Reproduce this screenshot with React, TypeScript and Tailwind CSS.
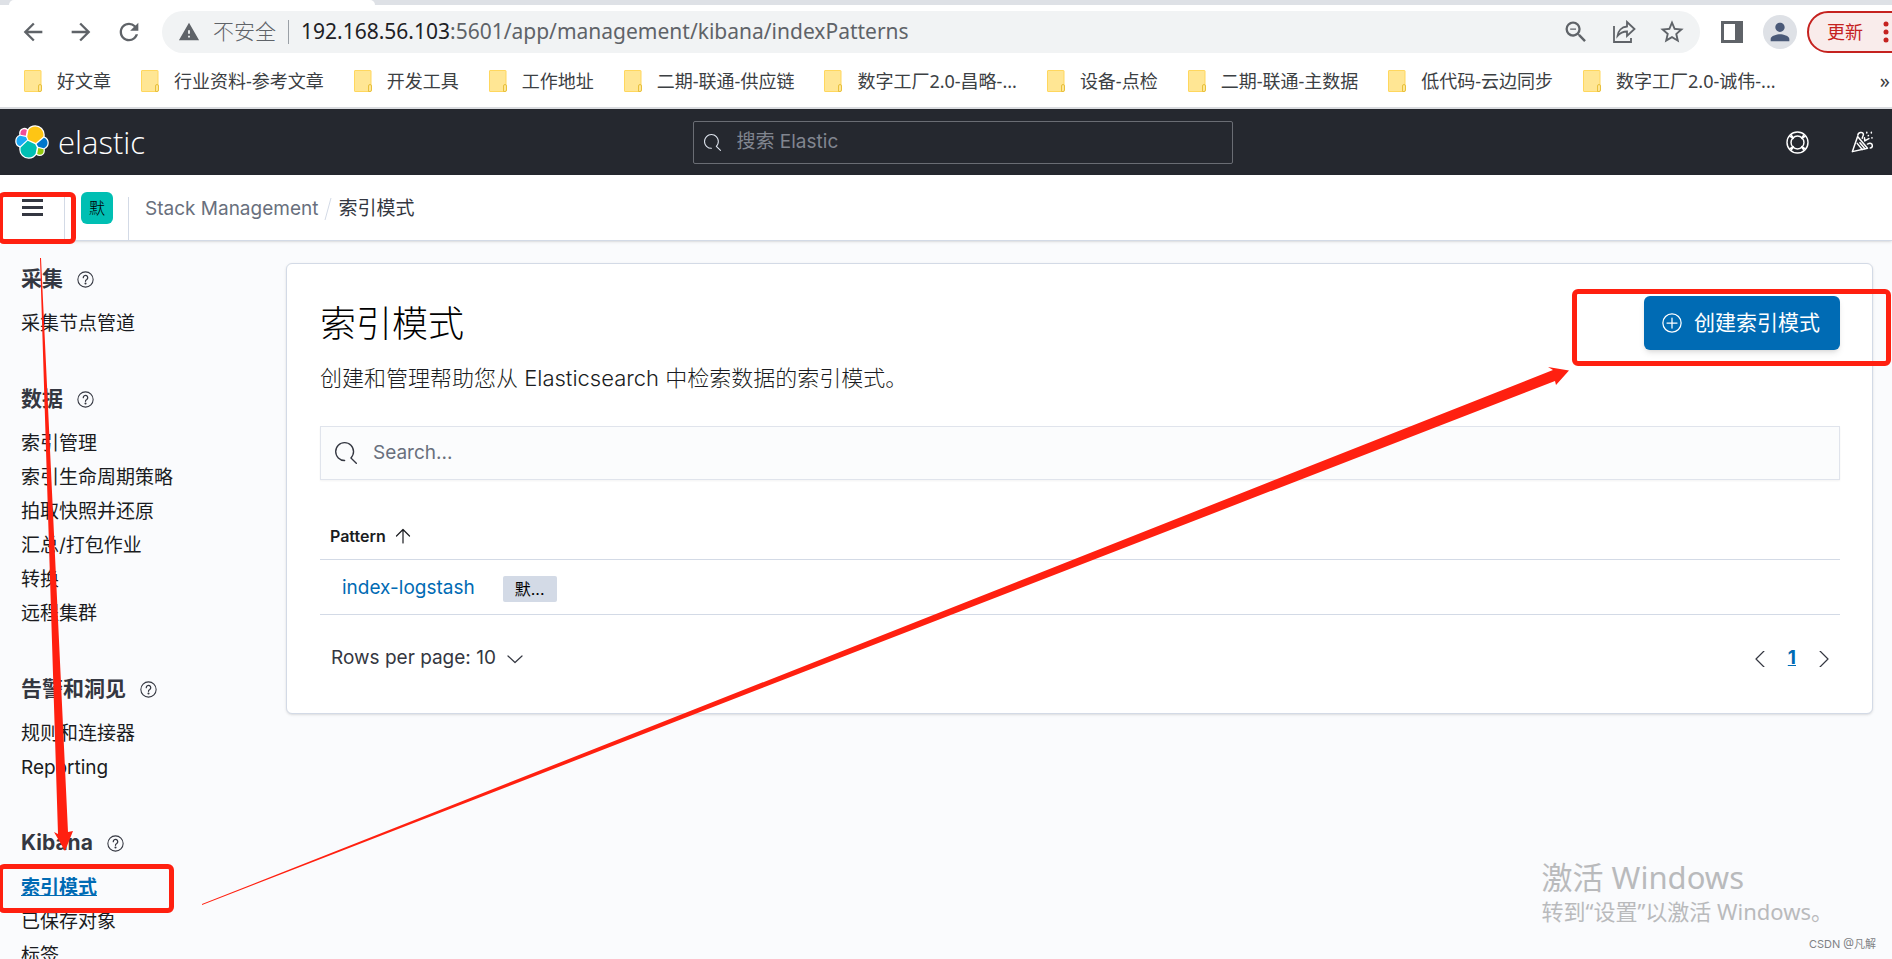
import type { ReactNode, SVGProps } from 'react';
import { MdArrowBack, MdArrowForward, MdOutlineZoomOut, MdPerson, MdRefresh, MdStarBorder, MdWarning } from 'react-icons/md';

interface NavSection {
  title: string;
  items: string[];
}

const bookmarks = [
  '好文章',
  '行业资料-参考文章',
  '开发工具',
  '工作地址',
  '二期-联通-供应链',
  '数字工厂2.0-昌略-...',
  '设备-点检',
  '二期-联通-主数据',
  '低代码-云边同步',
  '数字工厂2.0-诚伟-...',
];

const sections: NavSection[] = [
  { title: '采集', items: ['采集节点管道'] },
  {
    title: '数据',
    items: ['索引管理', '索引生命周期策略', '拍取快照并还原', '汇总/打包作业', '转换', '远程集群'],
  },
  { title: '告警和洞见', items: ['规则和连接器', 'Reporting'] },
  { title: 'Kibana', items: ['索引模式', '已保存对象', '标签'] },
];

const ACTIVE_ITEM = '索引模式';

// Elastic logo segments, 32x32 grid
const logoParts = [
  { fill: '#FEC514', d: 'M12.58 13.787l7.002 3.211 7.066-6.213a7.849 7.849 0 00.152-1.557c0-4.287-3.464-7.75-7.725-7.782a7.73 7.73 0 00-6.402 3.418l-1.176 6.117 1.083 2.806z' },
  { fill: '#00BFB3', d: 'M5.333 21.228A7.964 7.964 0 005.18 22.8c0 4.3 3.48 7.8 7.76 7.8a7.73 7.73 0 006.43-3.44l1.165-6.1-1.556-2.99-7.03-3.218-6.616 6.376z' },
  { fill: '#F04E98', d: 'M5.288 9.067l4.8 1.137L11.14 4.72a3.785 3.785 0 00-6.069 3.015c0 .457.073.906.217 1.332z' },
  { fill: '#1BA9F5', d: 'M4.872 10.214a5.293 5.293 0 00-3.482 4.976 5.25 5.25 0 003.4 4.9l6.735-6.12-1.237-2.652-5.416-1.104z' },
  { fill: '#93C90E', d: 'M20.873 27.195a3.765 3.765 0 002.285.777 3.78 3.78 0 003.79-3.784c0-.46-.08-.908-.23-1.34l-4.8-1.126-1.045 5.473z' },
  { fill: '#0077CC', d: 'M21.848 20.563l5.28 1.238a5.295 5.295 0 003.483-4.978 5.25 5.25 0 00-3.37-4.89l-6.906 6.056 1.513 2.574z' },
];

function ElasticLogo() {
  return (
    <svg viewBox="0 0 32 32" className="size-[34px]" aria-hidden="true">
      {logoParts.map((part) => (
        <path key={part.fill} d={part.d} fill="#fff" stroke="#fff" strokeWidth="2.4" strokeLinejoin="round" />
      ))}
      {logoParts.map((part) => (
        <path key={part.fill} d={part.d} fill={part.fill} />
      ))}
    </svg>
  );
}

function SearchIcon(props: SVGProps<SVGSVGElement>) {
  return (
    <svg viewBox="0 0 16 16" fill="currentColor" aria-hidden="true" {...props}>
      <path d="M11.271 11.978l3.872 3.873a.502.502 0 00.708 0 .502.502 0 000-.708l-3.565-3.564c2.38-2.747 2.267-6.923-.342-9.532-2.73-2.73-7.17-2.73-9.898 0-2.728 2.729-2.728 7.17 0 9.9a6.955 6.955 0 004.949 2.05.5.5 0 000-1 5.96 5.96 0 01-4.242-1.757 6.01 6.01 0 010-8.486 6.004 6.004 0 018.484 0 6.01 6.01 0 010 8.486.5.5 0 00.034.738z" />
    </svg>
  );
}

function LineIcon({ children, ...props }: SVGProps<SVGSVGElement> & { children: ReactNode }) {
  return (
    <svg
      viewBox="0 0 16 16"
      fill="none"
      stroke="currentColor"
      strokeLinecap="round"
      strokeLinejoin="round"
      aria-hidden="true"
      {...props}
    >
      {children}
    </svg>
  );
}

function HelpIcon() {
  return (
    <LineIcon className="size-[17px] text-[#343741]">
      <circle cx="8" cy="8" r="7.2" />
      <path d="M5.9 6.3a2.1 2.1 0 1 1 3.3 1.7C8.4 8.500 8 8.900 8 9.700" strokeWidth="1.200" />
      <circle cx="8" cy="11.800" r=".5" fill="currentColor" />
    </LineIcon>
  );
}

function CheerIcon() {
  return (
    <LineIcon className="size-[22px]" strokeWidth="1.100">
      <path d="M1 15L4.800 4 12 12.500z" />
      <path d="M4.500 9l3.700 4.500M6.500 8.500l3.500 4.300" />
      <path d="M5 3C5 1 8.500.2 9 2.200c.3 1.200-.8 1.800-.8 3" />
      <path d="M10 7.200L13 5.500M10 7.200L9.800 5M12 9.500c2-1 3.500-.5 3.500 1.300 0 1-.6 1.600-1.500 1.600" />
      <path d="M11.500 1v.4M14.800 1v.4M12.500 3.500l.2-.2M15.200 5h.1" />
    </LineIcon>
  );
}

function FolderIcon() {
  return (
    <svg viewBox="0 0 18 22" className="h-[22px] w-[18px]" aria-hidden="true">
      <rect x=".5" y=".5" width="16.500" height="21" rx=".5" fill="#ffe694" stroke="#ffd75e" />
      <path d="M14.500 21.500v-5.500a1.500 1.500 0 0 1 3 0v4a1.500 1.500 0 0 1-1.500 1.500z" fill="#ffe694" stroke="#e8c03c" />
    </svg>
  );
}

function BrowserChrome() {
  return (
    <div className="shrink-0 border-b-2 border-[#dadce0] bg-white font-['Noto_Sans','Noto_Sans_CJK_SC',sans-serif]">
      <div className="flex h-[5px] bg-[#dee1e6]">
        <div className="ml-[9px] w-[366px] rounded-t-md bg-white" />
      </div>

      <div className="flex h-[54px] items-center overflow-hidden text-[#5f6368]">
        <div className="flex w-[162px] shrink-0 items-center gap-5 pl-[19px]">
          <button type="button" aria-label="后退"><MdArrowBack className="size-7" /></button>
          <button type="button" aria-label="前进"><MdArrowForward className="size-7" /></button>
          <button type="button" aria-label="重新加载"><MdRefresh className="size-7" /></button>
        </div>

        <div className="flex h-[42px] min-w-0 flex-1 items-center rounded-full bg-[#f1f3f4] pr-[14px] pl-4">
          <MdWarning className="size-[22px] shrink-0" />
          <span className="ml-[13px] shrink-0 text-[21px] font-light">不安全</span>
          <span className="mx-3 h-6 w-px shrink-0 bg-[#9aa0a6]" />
          <span className="min-w-0 flex-1 truncate text-[21px]">
            <span className="text-[#202124]">192.168.56.103</span>
            :5601/app/management/kibana/indexPatterns
          </span>
          <div className="flex shrink-0 items-center gap-5">
            <button type="button" aria-label="缩小"><MdOutlineZoomOut className="size-7" /></button>
            <button type="button" aria-label="分享" className="flex w-7 justify-center">
              <svg viewBox="0 0 24 24" className="size-6" fill="none" stroke="currentColor" strokeWidth="1.800" aria-hidden="true">
                <path d="M2 6v16h17v-4" />
                <path d="M15 2l7.500 7-7.500 7v-4.500c-4 0-7 1.500-9.500 4.500C6 11 9.500 7 15 6.500z" />
              </svg>
            </button>
            <button type="button" aria-label="收藏"><MdStarBorder className="size-7" /></button>
          </div>
        </div>

        <div className="flex w-[192px] shrink-0 items-center">
          <button type="button" aria-label="侧边栏" className="ml-[21px]">
            <svg viewBox="0 0 22 22" className="size-[22px]" aria-hidden="true">
              <path d="M0 0h22v22H0zM3 3v16h11V3z" fill="currentColor" fillRule="evenodd" />
            </svg>
          </button>
          <button type="button" aria-label="用户" className="ml-5 flex size-[34px] shrink-0 items-center justify-center rounded-full bg-[#dee1e6] text-[#4a5a78]">
            <MdPerson className="size-7" />
          </button>
          <button type="button" className="ml-[10px] flex h-[42px] w-[104px] shrink-0 items-center gap-5 rounded-full border-2 border-[#c5221f] bg-[#f9eceb] pl-[18px] text-[18px] text-[#c5221f]">
            更新
            <svg viewBox="0 0 6 22" className="h-[22px] w-[6px]" fill="currentColor" aria-hidden="true">
              <circle cx="3" cy="3" r="2.500" />
              <circle cx="3" cy="11" r="2.500" />
              <circle cx="3" cy="19" r="2.500" />
            </svg>
          </button>
        </div>
      </div>

      <nav className="flex h-12 items-center justify-between pr-[2px] pb-[5px] pl-6" aria-label="书签">
        <div className="flex min-w-0 gap-[30px] overflow-hidden">
          {bookmarks.map((name) => (
            <a key={name} href="#bookmark" className="flex shrink-0 items-center gap-[15px] text-[18px] leading-6 text-[#3c4043]">
              <FolderIcon />
              {name}
            </a>
          ))}
        </div>
        <button type="button" aria-label="更多书签" className="text-[20px] leading-6 text-[#3c4043]">»</button>
      </nav>
    </div>
  );
}

function KibanaHeader() {
  return (
    <header className="shrink-0">
      <div className="flex h-[66px] items-center bg-[#25282f] text-white">
        <div className="flex flex-1 basis-0 items-center gap-[9px] pl-[15px]">
          <ElasticLogo />
          <span className="font-['Open_Sans',sans-serif] text-[31px] leading-9 font-light">elastic</span>
        </div>
        <label className="ml-[37px] flex h-[43px] w-[540px] items-center rounded-xs border border-[#6a6d74] pl-[10px]">
          <SearchIcon className="size-[17px] shrink-0 text-[#dfe5ef]" />
          <input
            type="search"
            aria-label="搜索 Elastic"
            placeholder="搜索 Elastic"
            className="ml-4 min-w-0 flex-1 bg-transparent text-[19px] outline-none placeholder:text-[#81858f]"
          />
        </label>
        <div className="flex flex-1 basis-0 items-center justify-end gap-[42px] pr-[19px]">
          <button type="button" aria-label="帮助">
            <LineIcon className="size-[23px]">
              <circle cx="8" cy="8" r="7.300" />
              <circle cx="8" cy="8" r="4.500" />
              <path d="M2.900 3.700l2 1.500M3.700 2.900l1.500 2M12.300 2.900l-1.500 2M13.100 3.700l-2 1.500M2.900 12.300l2-1.500M3.700 13.100l1.500-2M12.300 13.100l-1.500-2M13.100 12.300l-2-1.500" />
            </LineIcon>
          </button>
          <button type="button" aria-label="新闻"><CheerIcon /></button>
        </div>
      </div>

      <div className="flex h-[66px] border-b border-[#d3dae6] bg-white text-[19px] shadow-sm">
        <div className="mt-[22px] flex w-[65px] items-start border-r border-[#d3dae6] pl-[22px]">
          <button type="button" aria-label="菜单" className="flex flex-col gap-1 pt-[2px]">
            <span className="h-[3px] w-[21px] bg-[#343741]" />
            <span className="h-[3px] w-[21px] bg-[#343741]" />
            <span className="h-[3px] w-[21px] bg-[#343741]" />
          </button>
        </div>
        <button type="button" className="mt-[17px] ml-4 size-8 rounded-md bg-[#00bfb3] text-[16px] font-light text-black">默</button>
        <div className="mt-[22px] ml-[15px] border-r border-[#d3dae6]" />
        <nav className="mt-[18px] ml-4 flex h-8 items-center" aria-label="面包屑">
          <a href="#management" className="text-[#69707d]">Stack Management</a>
          <svg viewBox="0 0 8 22" className="mx-[6px] h-[22px] w-2" stroke="#d3dae6" aria-hidden="true">
            <path d="M1 22L7 0" />
          </svg>
          <span className="text-[#343741]">索引模式</span>
        </nav>
      </div>
    </header>
  );
}

function SideNav() {
  return (
    <nav className="flex w-[286px] shrink-0 flex-col gap-[42px] pt-[22px] pl-[21px]" aria-label="管理">
      {sections.map((section) => (
        <section key={section.title}>
          <h2 className="flex h-8 items-center gap-[14px] text-[21px] font-bold text-[#343741]">
            {section.title}
            <HelpIcon />
          </h2>
          <ul className="mt-3">
            {section.items.map((item) => (
              <li key={item} className="h-[34px] text-[19px] leading-[34px] whitespace-nowrap">
                <a
                  href="#section"
                  className={item === ACTIVE_ITEM ? 'font-bold text-[#006bb4] underline' : 'text-[#1a1c21]'}
                >
                  {item}
                </a>
              </li>
            ))}
          </ul>
        </section>
      ))}
    </nav>
  );
}

function IndexPatternsPanel() {
  return (
    <section className="rounded-md border border-[#d3dae6] bg-white pt-8 pr-8 pb-[38px] pl-[33px] shadow-sm">
      <div className="flex items-start justify-between">
        <div>
          <h1 className="mt-1 text-[36px] leading-[48px] font-light text-black">索引模式</h1>
          <p className="mt-[14px] text-[22px] leading-8 font-light text-[#1a1c21]">
            创建和管理帮助您从 Elasticsearch 中检索数据的索引模式。
          </p>
        </div>
        <button type="button" className="flex h-[54px] w-[196px] items-center gap-3 rounded-md bg-[#006bb4] pl-[18px] text-[21px] whitespace-nowrap text-white shadow-md">
          <LineIcon className="size-5 shrink-0" strokeWidth="1">
            <circle cx="8" cy="8" r="7.300" />
            <path d="M8 4v8M4 8h8" />
          </LineIcon>
          创建索引模式
        </button>
      </div>

      <label className="mt-8 flex h-[54px] items-center border border-[#e0e4ec] bg-[#fbfcfd] pl-[14px] shadow-xs">
        <SearchIcon className="size-[22px] shrink-0 text-[#343741]" />
        <input
          type="search"
          aria-label="Search"
          placeholder="Search..."
          className="ml-4 min-w-0 flex-1 bg-transparent text-[19px] outline-none placeholder:text-[#69707d]"
        />
      </label>

      <table className="mt-8 w-full">
        <thead>
          <tr className="h-[47px] border-b border-[#d3dae6]">
            <th className="pt-[2px] pl-[10px] text-left text-[16px] font-semibold text-[#1a1c21]">
              <button type="button" className="flex items-center gap-[9px]">
                Pattern
                <LineIcon className="size-4" strokeWidth="1.200">
                  <path d="M8 15V1.500M1.500 8L8 1.500 14.500 8" />
                </LineIcon>
              </button>
            </th>
          </tr>
        </thead>
        <tbody>
          <tr className="h-[55px] border-b border-[#d3dae6]">
            <td className="pt-1 pl-[22px]">
              <div className="flex items-center gap-7">
                <a href="#index-logstash" className="text-[19px] text-[#006bb4]">index-logstash</a>
                <span className="h-[26px] rounded-xs bg-[#d3dae6] px-3 text-[16px] leading-[26px] text-black">默...</span>
              </div>
            </td>
          </tr>
        </tbody>
      </table>

      <div className="mt-7 flex h-8 items-center justify-between pr-2 pl-[11px] text-[19px] text-[#343741]">
        <button type="button" className="flex items-center gap-[11px]">
          Rows per page: 10
          <LineIcon className="size-4" strokeWidth="1.200">
            <path d="M1 5l7 6.500L15 5" />
          </LineIcon>
        </button>
        <div className="flex items-center gap-5">
          <button type="button" aria-label="上一页">
            <LineIcon className="size-4" strokeWidth="1.200"><path d="M12 0L4 8l8 8" /></LineIcon>
          </button>
          <button type="button" className="font-bold text-[#006bb4] underline">1</button>
          <button type="button" aria-label="下一页">
            <LineIcon className="size-4" strokeWidth="1.200"><path d="M4 0l8 8-8 8" /></LineIcon>
          </button>
        </div>
      </div>
    </section>
  );
}

// Red walkthrough marks drawn over the page
function Annotations() {
  return (
    <div className="pointer-events-none absolute inset-0 overflow-hidden">
      <div className="absolute top-[192px] -left-[2px] h-[52px] w-[78px] rounded-md border-5 border-[#ff2010]" />
      <div className="absolute top-[864px] -left-[2px] h-[49px] w-[176px] rounded-md border-5 border-[#ff2010]" />
      <div className="absolute top-[289px] right-px h-[77px] w-[319px] rounded-md border-5 border-[#ff2010]" />
      <svg width="1892" height="959" fill="#ff2010" className="absolute top-0 left-0" aria-hidden="true">
        <path d="M40 258h1l27 574 5-1-8 20-11-19 4 2z" />
        <path d="M202 904L1553 370l-5-3 21 3.500-13 14.500-1-4L202 905z" />
      </svg>
    </div>
  );
}

export default function App() {
  return (
    <div className="relative flex h-screen flex-col overflow-hidden bg-[#fafbfd] font-['Inter','Noto_Sans_CJK_SC',sans-serif]">
      <BrowserChrome />
      <KibanaHeader />
      <div className="flex min-h-0 flex-1">
        <SideNav />
        <main className="min-w-0 flex-1 pt-[22px] pr-[19px]">
          <IndexPatternsPanel />
        </main>
      </div>

      <div className="pointer-events-none absolute right-[59px] bottom-8 font-['Noto_Sans','Noto_Sans_CJK_SC',sans-serif] text-[#b9babc]">
        <p className="text-[31px] leading-9">激活 Windows</p>
        <p className="text-[22px] leading-8">转到“设置”以激活 Windows。</p>
      </div>
      <p className="absolute right-4 bottom-[7px] text-[11px] leading-4 text-[#808285]">CSDN @凡解</p>

      <Annotations />
    </div>
  );
}
